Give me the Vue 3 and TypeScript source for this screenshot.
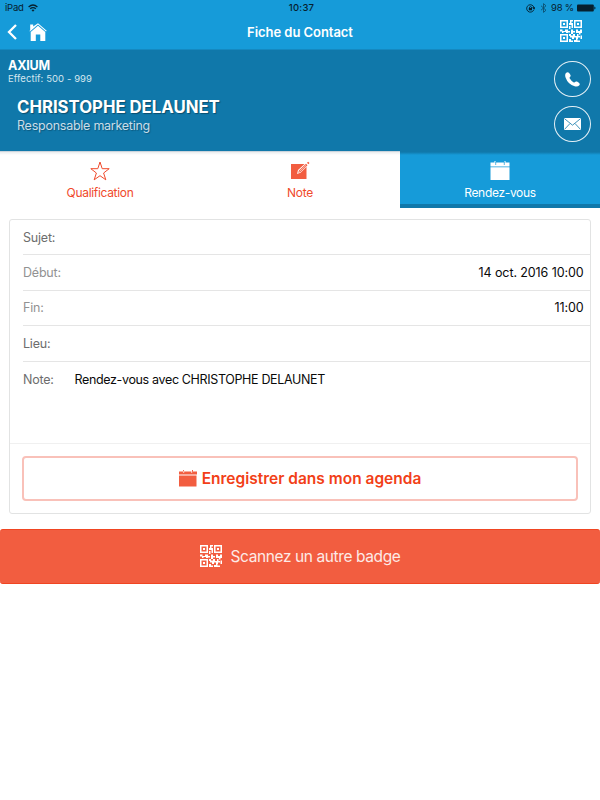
<script setup lang="ts">
import { computed, ref } from 'vue'

interface Field {
  label: string
  value: string
  muted?: boolean
}

const tabs = ['Qualification', 'Note', 'Rendez-vous'] as const
const active = ref<(typeof tabs)[number]>('Rendez-vous')

const contact = {
  company: 'AXIUM',
  size: 'Effectif: 500 - 999',
  name: 'CHRISTOPHE DELAUNET',
  role: 'Responsable marketing',
}

const fields: Field[] = [
  { label: 'Sujet:', value: '' },
  { label: 'Début:', value: '14 oct. 2016 10:00', muted: true },
  { label: 'Fin:', value: '11:00', muted: true },
  { label: 'Lieu:', value: '' },
]
const note = computed(() => `Rendez-vous avec ${contact.name}`)

// Module pattern shared by both QR icons, laid out on a 22-unit grid.
const qrPath =
  'M0 0h8v8H0zM1.500 1.500v5h5v-5zM14 0h8v8h-8zM15.500 1.500v5h5v-5zM0 14h8v8H0zM1.500 15.500v5h5v-5z' +
  'M3 3h2v2H3zM17 3h2v2h-2zM3 17h2v2H3z' +
  'M10 0h3v1.500h-1.500V3H13v5h-1.500V5H9V3h1zM9 6h1.500v3H9z' +
  'M0 9.500h2.500V11H5V9.500h3V11h2v1.500H8V13H6v-1H3.500v1H2v-1.500H0zM11 9.500h2V11h2v1.500h-2V14h-2zM16 9.500h2V11h2V9.500h2V13h-1.500v1.500H19V13h-3z' +
  'M9 14h2v1.500h2V14h2v2h2v-2h1.500v2H20v1.500h-2V19h-2v-1.500h-2V19h-2v-1.500h-2V16H9zM20.500 15.500H22V19h-1.500zM9 19h2v1.500h2V22H9zM14 20h2v-1h1.500v1.500H20V22h-6z'
</script>

<template>
  <div class="screen">
    <header class="top">
      <div class="status">
        <div class="carrier">
          <span>iPad</span>
          <svg class="wifi" viewBox="0 0 10 8">
            <path d="M.6 3Q5-.9 9.4 3M2.2 4.8Q5 2.4 7.8 4.8" />
            <path class="solid" d="M3.5 6Q5 4.8 6.5 6L5 7.7z" />
          </svg>
        </div>
        <span class="clock">10:37</span>
        <div class="battery">
          <svg class="lock" viewBox="0 0 9 9">
            <path d="M7.8 5.8A3.7 3.7 0 1 1 8 3.800M6.700 3.700h2.200L8 5.200z" />
            <path d="M3.5 4V3.2q1-1.2 2 0V4" />
            <path class="solid" d="M2.800 4h3.200v2.300H2.800z" />
          </svg>
          <svg class="bluetooth" viewBox="0 0 7 10">
            <path d="M1 2.8l5 4.4L3.5 9.4V.6L6 2.8 1 7.2" />
          </svg>
          <span class="percent">98 %</span>
          <svg class="cell" viewBox="0 0 19 8">
            <rect x="0" y="0.500" width="16.800" height="7" rx="1" />
            <path d="M17.300 2.5q1.200.2 1.200 1.500t-1.200 1.500z" />
          </svg>
        </div>
      </div>
      <nav class="bar">
        <div class="left">
          <svg class="chevron" viewBox="0 0 10 16"><path d="M9 1L2 8l7 7" /></svg>
          <svg class="home" viewBox="0 0 18 18">
            <path d="M1.2 7.700V1.5h3v2L9 .2l8.7 7.6-.7.7L9 1.6 1 8.5l-.8-.8z" />
            <path d="M1.7 9L9 2.7 16.3 9v9h-5v-6.5H6.8V18H1.7z" />
          </svg>
        </div>
        <h1>Fiche du Contact</h1>
        <svg class="qr" viewBox="0 0 22 22"><path fill-rule="evenodd" :d="qrPath" /></svg>
      </nav>
    </header>

    <section class="contact">
      <div class="identity">
        <div class="company">{{ contact.company }}</div>
        <div class="size">{{ contact.size }}</div>
        <div class="name"><span>{{ contact.name }}</span></div>
        <div class="role">{{ contact.role }}</div>
      </div>
      <div class="actions">
        <button class="round" aria-label="Appeler">
          <svg viewBox="0 0 16 16">
            <path d="M.8 1.200Q2.600-.400 4.200.800q1.500 1.600 1.800 3 .2 1.100-.9 1.900-.5.500 0 1.300 1.500 2.500 3.900 3.900.8.500 1.300 0 1.200-1.300 2.500-.7l2 1.300q1.600 1.200.5 2.700-1.900 1.900-5 1Q3.200 13 .700 6-.400 3 .800 1.200z" />
          </svg>
        </button>
        <button class="round" aria-label="Écrire">
          <svg class="mail" viewBox="0 0 17 12">
            <rect width="17" height="12" />
            <path d="M.3.5l8.200 6.700L16.700.5M.4 11.500l5.600-6M16.600 11.500L11 5.500" />
          </svg>
        </button>
      </div>
    </section>

    <div class="tabs">
      <button
        v-for="tab in tabs"
        :key="tab"
        class="tab"
        :class="{ active: tab === active }"
        @click="active = tab"
      >
        <svg v-if="tab === 'Qualification'" class="star" viewBox="0 0 20 20">
          <path d="M10 1l2.200 6.700h7L13.600 12l2.200 6.800L10 14.700l-5.800 4.100L6.400 12 .800 7.700h7z" />
        </svg>
        <svg v-else-if="tab === 'Note'" class="edit" viewBox="0 0 20 20">
          <path d="M1 3h15.500v15H1z" />
          <path class="halo" d="M7 13l1-4L16.500 1.200 19 3.500l-8.500 8.300z" />
          <path class="pencil" d="M8.200 11.800l.8-2.300 7-6.700 1.500 1.500-7 6.700zM17 1.800L18.200.700l1.300 1.300-1.200 1.200z" />
          <path class="core" d="M9.500 10.500l6.500-6.200" />
        </svg>
        <svg v-else class="cal" viewBox="0 0 20 20">
          <path d="M.5 1.500h4V0h1v1.500h9V0h1v1.500h4V5.500H.5zM.5 6.300h19V19H.5z" />
          <path class="rings" d="M5.700 1v3M14.300 1v3" />
        </svg>
        <span>{{ tab }}</span>
      </button>
    </div>

    <main class="card">
      <div v-for="f in fields" :key="f.label" class="row" :class="{ muted: f.muted }">
        <span>{{ f.label }}</span>
        <span class="value">{{ f.value }}</span>
      </div>
      <div class="row note">
        <span class="label">Note:</span>
        <span class="text">{{ note }}</span>
      </div>
      <div class="save-area">
        <button class="save">
          <svg viewBox="0 0 18 17">
            <path d="M0 1.500h4V0h1v1.500h8V0h1v1.500h4V4.500H0zM0 5.500h17.500V16.500H0z" />
            <path class="rings" d="M4.700.8v2.200M12.700.8v2.200" />
          </svg>
          <span>Enregistrer dans mon agenda</span>
        </button>
      </div>
    </main>

    <button class="scan">
      <svg class="qr" viewBox="0 0 22 22"><path fill-rule="evenodd" :d="qrPath" /></svg>
      <span>Scannez un autre badge</span>
    </button>
  </div>
</template>

<style>
body {
  background: #fff;
}
</style>

<style scoped>
.screen {
  width: 600px;
  height: 800px;
  background: #fff;
  font-family: Inter, 'Liberation Sans', sans-serif;
  overflow: hidden;
}
.screen * {
  box-sizing: border-box;
}
button {
  font: inherit;
  margin: 0;
  padding: 0;
  border: 0;
  background: none;
}
svg {
  display: block;
  flex: none;
  fill: currentColor;
}
span,
h1 {
  white-space: nowrap;
}
.top {
  height: 50px;
  background: #169bd9;
  border-bottom: 1px solid #1489c1;
}
.status {
  height: 16px;
  padding: 0 4px 0 5px;
  display: grid;
  grid-template-columns: 1fr auto 1fr;
  align-items: center;
  font-size: 9.500px;
  line-height: 16px;
  color: #06202e;
}
.carrier,
.battery {
  display: flex;
  align-items: center;
}
.carrier {
  gap: 4px;
  letter-spacing: -0.2px;
}
.wifi {
  width: 10px;
  height: 8px;
}
.wifi path,
.lock path,
.bluetooth path {
  fill: none;
  stroke: currentColor;
  stroke-width: 0.900;
}
.wifi path {
  stroke-width: 1.300;
}
.wifi .solid,
.lock .solid {
  fill: currentColor;
  stroke: none;
}
.clock {
  margin-left: 2px;
  font-weight: 500;
  letter-spacing: 0.2px;
}
.battery {
  justify-content: flex-end;
}
.lock {
  width: 9px;
  height: 9px;
  margin-right: 5px;
}
.bluetooth {
  width: 7px;
  height: 10px;
  margin-right: 4px;
  opacity: 0.6;
}
.percent {
  margin-right: 3px;
  letter-spacing: -0.2px;
}
.cell {
  width: 19px;
  height: 8px;
}
.bar {
  height: 32px;
  padding: 0 18px 0 7px;
  display: grid;
  grid-template-columns: 1fr auto 1fr;
  align-items: center;
  color: #fff;
}
.left {
  display: flex;
  align-items: center;
  gap: 12px;
}
.chevron {
  width: 10px;
  height: 16px;
}
.chevron path {
  fill: none;
  stroke: currentColor;
  stroke-width: 2.300;
}
.home {
  width: 18px;
  height: 18px;
}
h1 {
  margin: 0 0 0 11px;
  font-size: 13px;
  font-weight: 600;
  line-height: 18px;
  letter-spacing: -0.05px;
}
.qr {
  width: 22px;
  height: 22px;
}
.bar .qr {
  justify-self: end;
  margin-top: -2px;
}
.contact {
  height: 101px;
  padding: 0 9.500px 0 8px;
  display: flex;
  justify-content: space-between;
  background: #1078aa;
  color: #fff;
}
.company {
  margin-top: 8px;
  font-size: 12.500px;
  font-weight: 700;
  line-height: 16px;
  letter-spacing: -0.2px;
}
.size {
  margin-top: -1px;
  font-size: 9.500px;
  line-height: 11px;
  letter-spacing: 0.08px;
  color: #d3e6ef;
}
.name {
  margin: 13px 0 0 9px;
  font-size: 16.800px;
  font-weight: 700;
  line-height: 20px;
  letter-spacing: -0.03px;
  text-shadow: 1px 1px 1px rgba(0, 0, 0, 0.35);
}
.role {
  margin-left: 9px;
  font-size: 12.500px;
  line-height: 17px;
  letter-spacing: -0.25px;
  color: #c9dde8;
  text-shadow: 1px 1px 1px rgba(0, 0, 0, 0.25);
}
.actions {
  padding-top: 11px;
  display: flex;
  flex-direction: column;
  gap: 9px;
}
.round {
  width: 36.500px;
  height: 36px;
  display: grid;
  place-items: center;
  border: 1px solid #e4f0f6;
  border-radius: 50%;
  color: #fff;
}
.round svg {
  width: 15px;
  height: 15px;
}
.round .mail {
  width: 17px;
  height: 12px;
}
.mail path {
  fill: none;
  stroke: #1078aa;
  stroke-width: 0.800;
}
.tabs {
  height: 57px;
  display: grid;
  grid-template-columns: repeat(3, 1fr);
}
.tab {
  padding-top: 10px;
  display: flex;
  flex-direction: column;
  align-items: center;
  font-size: 12px;
  line-height: 16px;
  letter-spacing: -0.32px;
  color: #f04a2c;
  background: linear-gradient(#b9c6d2, #eef0f1 1.500px, #fff 4px);
}
.tab svg {
  width: 20px;
  height: 20px;
  margin-bottom: 4px;
}
.tab.active {
  color: #fff;
  background: linear-gradient(#1078aa 1px, #169bd9 4px);
  border-bottom: 4px solid #1078aa;
}
.star path {
  fill: none;
  stroke: currentColor;
  stroke-width: 1;
}
.edit {
  color: #f25d40;
}
.halo {
  fill: #fff;
}
.pencil {
  fill: currentColor;
}
.core {
  fill: none;
  stroke: #fff;
  stroke-width: 0.600;
}
.rings {
  fill: none;
  stroke: #169bd9;
  stroke-width: 0.700;
}
.card {
  height: 295px;
  margin: 11px 9px 0;
  border: 1px solid #e2e3e3;
  border-radius: 3px;
}
.row {
  height: 35.600px;
  margin-left: 13px;
  padding: 1px 6.500px 0 0;
  display: flex;
  align-items: center;
  justify-content: space-between;
  border-bottom: 1px solid #e5e5e5;
  font-size: 12.500px;
  line-height: 18px;
  letter-spacing: -0.2px;
  color: #6d6d6d;
}
.row:first-child {
  height: 35px;
}
.row.muted {
  color: #929292;
}
.row .value,
.row .text {
  color: #0a0a0a;
}
.row .value {
  letter-spacing: -0.1px;
}
.row .text {
  letter-spacing: -0.35px;
}
.row.note {
  height: 82.500px;
  margin-left: 0;
  padding: 9px 7px 0 13px;
  align-items: flex-start;
  justify-content: flex-start;
  border-color: #f0f0f0;
}
.note .label {
  width: 51.500px;
}
.save-area {
  padding: 12px 12px 0;
}
.save {
  width: 100%;
  height: 45px;
  display: flex;
  align-items: center;
  justify-content: center;
  gap: 5px;
  border: 2px solid #f9c1b9;
  border-radius: 4px;
  font-size: 15.500px;
  font-weight: 600;
  color: #f23f18;
}
.save svg {
  width: 18px;
  height: 17px;
  color: #f25d40;
}
.save .rings {
  stroke: #fff;
}
.scan {
  width: 100%;
  height: 54.500px;
  margin-top: 15px;
  display: flex;
  align-items: center;
  justify-content: center;
  gap: 9px;
  background: #f25d40;
  border: solid #f04522;
  border-width: 1px 0;
  border-radius: 3px;
  font-size: 15.500px;
  letter-spacing: -0.4px;
  color: #fdeae6;
}
.scan .qr {
  color: #fff;
}
</style>
